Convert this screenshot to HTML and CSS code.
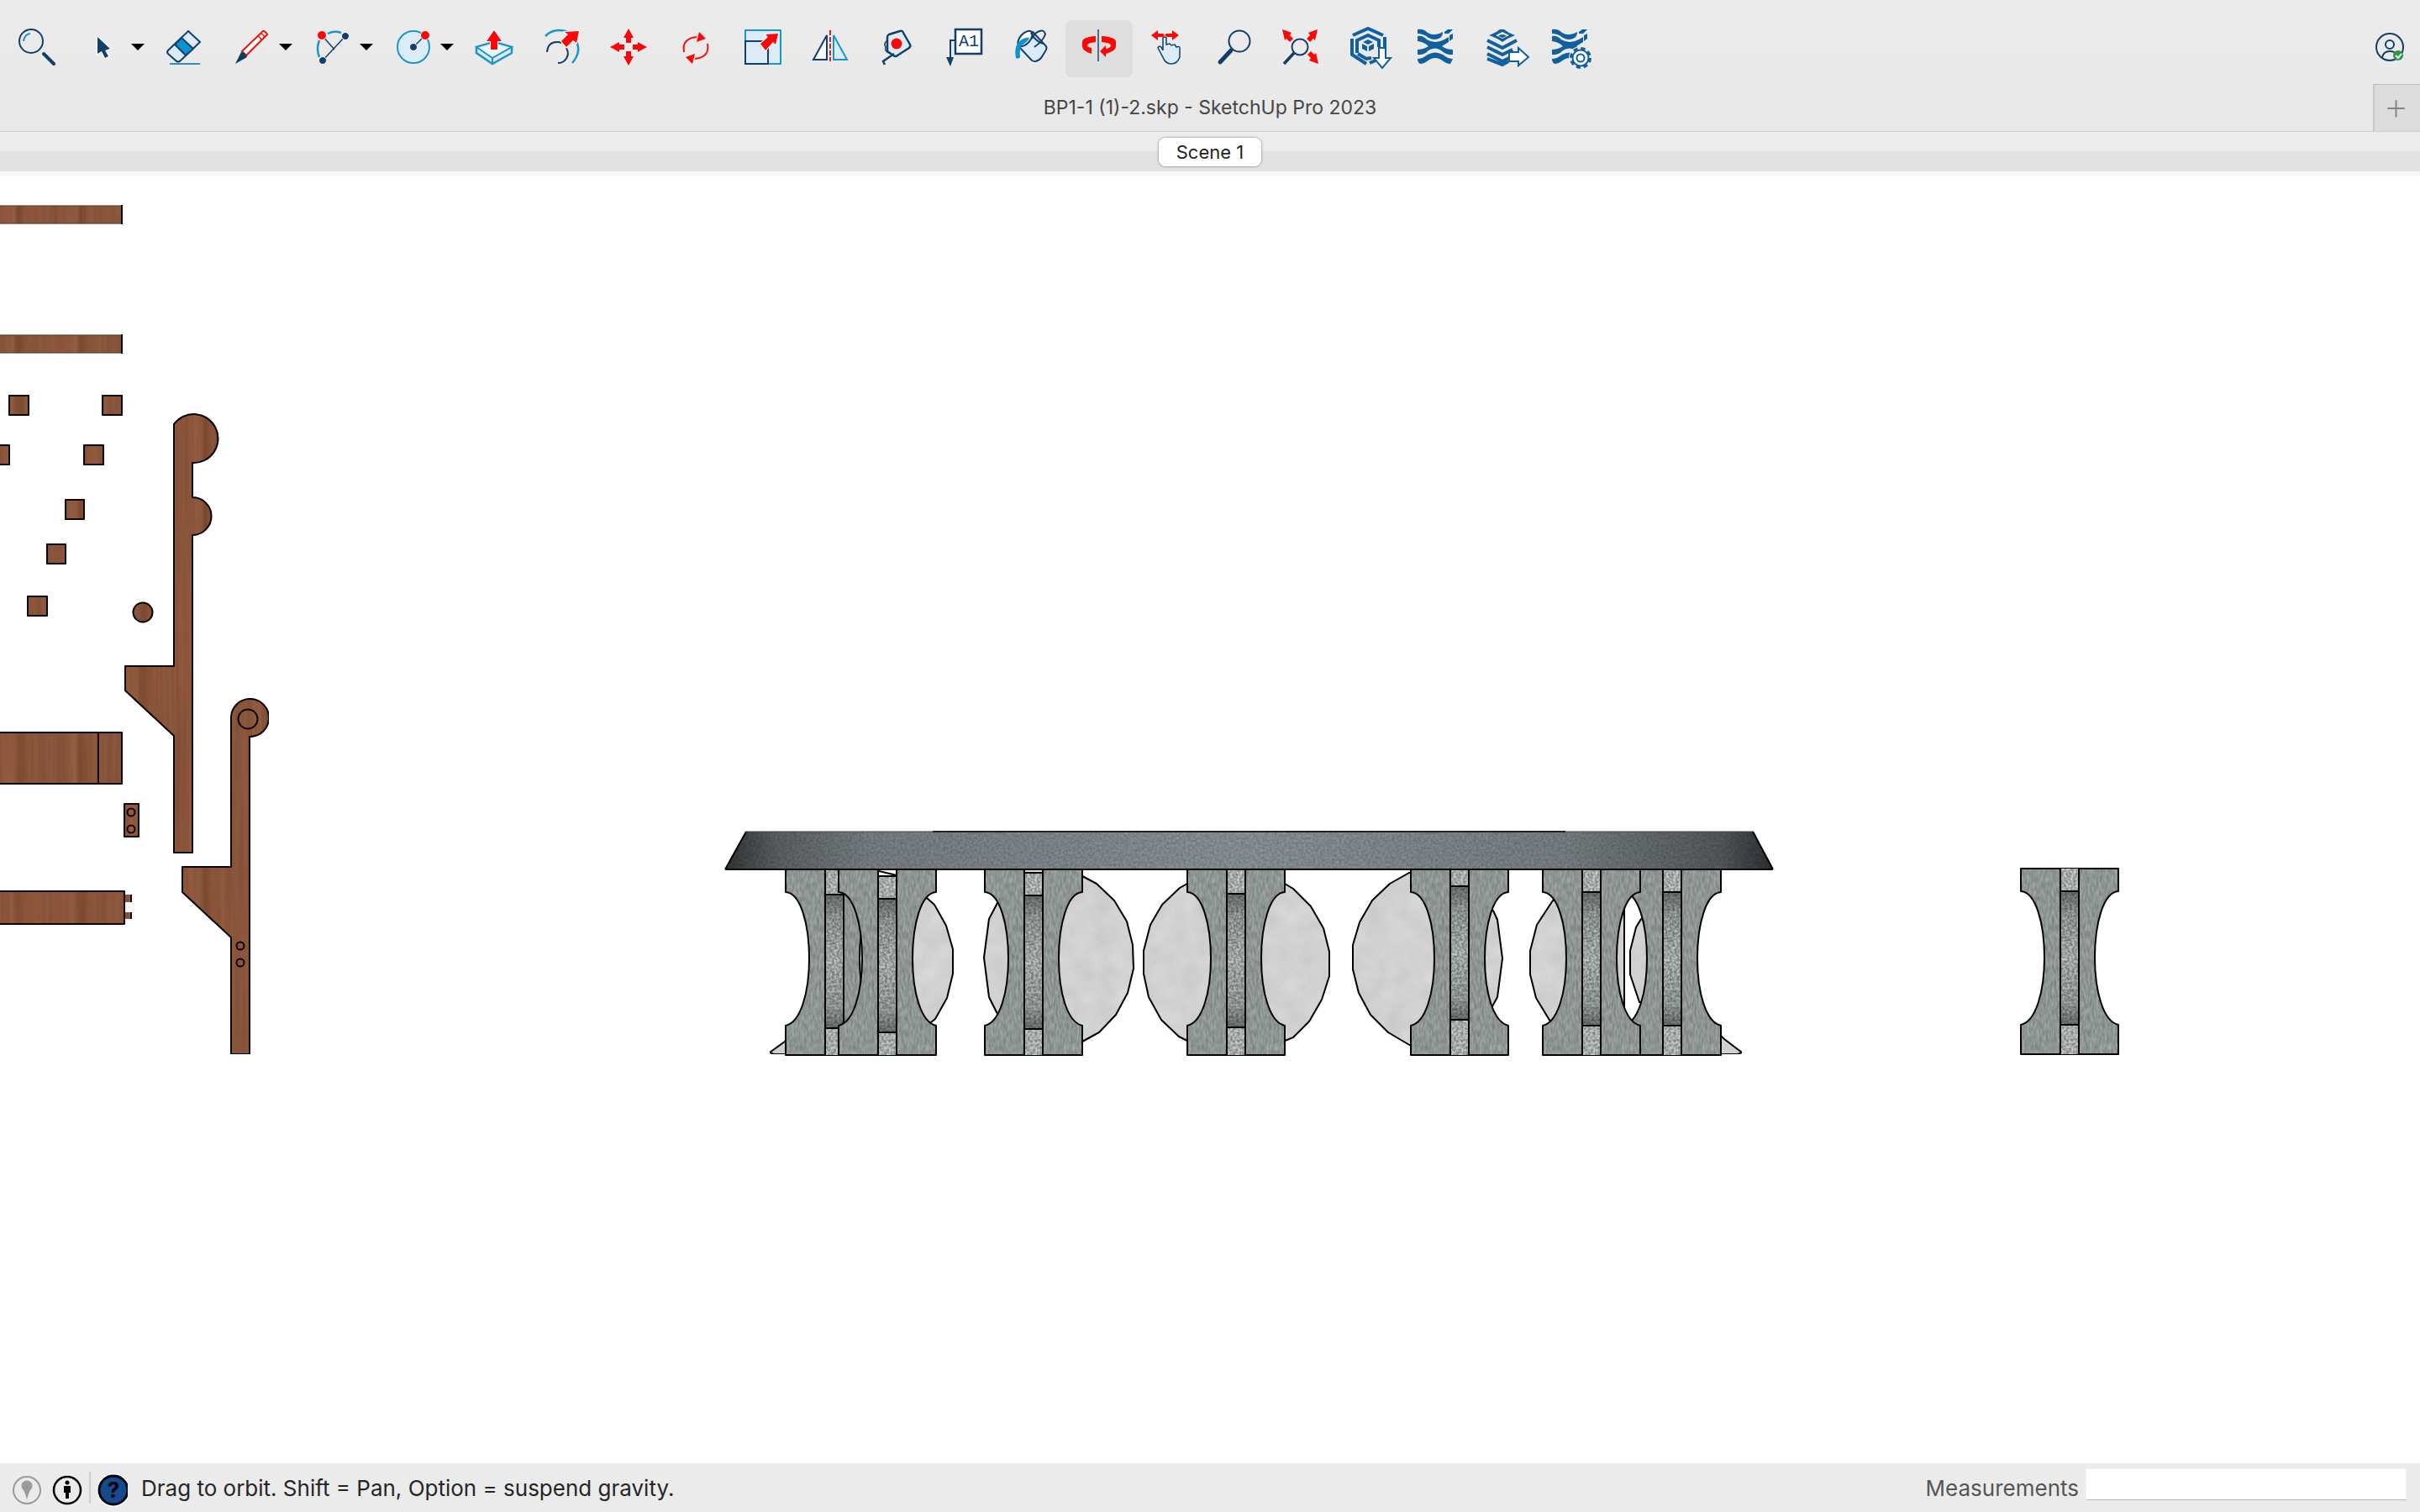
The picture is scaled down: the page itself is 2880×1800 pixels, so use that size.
FILE: index.html
```html
<!DOCTYPE html>
<html lang="en">
<head>
<meta charset="UTF-8">
<meta name="viewport" content="width=device-width, initial-scale=1.0">
<title>BP1-1 (1)-2.skp - SketchUp Pro 2023</title>
<link rel="stylesheet" href="styles.css">
</head>
<body>
<header>
    <div class="toolbar">
        <button class="tool" aria-label="Search">
            <svg viewBox="0 0 80 68">
                <circle class="navy" cx="33" cy="25" r="14"/>
                <path class="cyan" d="M24 25q1-8 8-9"/>
                <path class="navy" stroke-width="4" stroke-linecap="round" d="M48 40l12 12"/>
            </svg>
        </button>
        <div class="group">
            <button class="tool" aria-label="Select">
                <svg viewBox="0 0 64 68">
                    <path fill="#123f69" stroke="#fff" stroke-width="2" paint-order="stroke" d="M32 20v20l5-3 4 8 4-2-4-7 6-2z"/>
                </svg>
            </button>
            <button class="more" aria-label="Select options"><svg viewBox="0 0 32 68"><path d="M8 28h16l-8 8z"/></svg></button>
        </div>
        <button class="tool" aria-label="Eraser">
            <svg viewBox="0 0 80 68">
                <path class="navy" fill="#dcebf7" d="M44 13l14 13-23 22q-3 3-6 0l-9-8q-2-2 0-4z"/>
                <path fill="#0a93d3" stroke="#123f69" d="M36 21l14 13-9 8-13-13z"/>
                <path stroke="#2b93b8" d="M22 52h36"/>
            </svg>
        </button>
        <div class="group">
            <button class="tool" aria-label="Line">
                <svg viewBox="0 0 64 68">
                    <path fill="#fff" stroke="#e8150f" d="M28 37l25-24q3 0 5 4l-25 25z"/>
                    <path stroke="#e8150f" stroke-width="1.5" d="M46 19q4 1 5 5M50 16q4 1 5 5"/>
                    <path fill="#143a5c" d="M20 52l7-14q5 0 7 6z"/>
                </svg>
            </button>
            <button class="more" aria-label="Line options"><svg viewBox="0 0 32 68"><path d="M8 28h16l-8 8z"/></svg></button>
        </div>
        <div class="group">
            <button class="tool" aria-label="Arc">
                <svg viewBox="0 0 64 68">
                    <path class="cyan" stroke-width="2.5" d="M34 16q8-4 16-1M24 24q-4 10 0 20"/>
                    <path class="navy thin" d="M27 18l15 17M55 19L28 48"/>
                    <circle class="dot red" cx="27" cy="18" r="5.5"/>
                    <circle class="dot" cx="55" cy="19" r="4.5"/>
                    <circle class="dot" cx="28" cy="48" r="4.5"/>
                </svg>
            </button>
            <button class="more" aria-label="Arc options"><svg viewBox="0 0 32 68"><path d="M8 28h16l-8 8z"/></svg></button>
        </div>
        <div class="group">
            <button class="tool" aria-label="Circle">
                <svg viewBox="0 0 64 68">
                    <circle class="cyan tint" cx="40" cy="32" r="19"/>
                    <path class="navy thin" d="M40 32l14-14"/>
                    <circle class="dot red" cx="54" cy="18" r="5.5"/>
                    <circle class="dot" cx="40" cy="32" r="4.5"/>
                </svg>
            </button>
            <button class="more" aria-label="Circle options"><svg viewBox="0 0 32 68"><path d="M8 28h16l-8 8z"/></svg></button>
        </div>
        <button class="tool" aria-label="Push/Pull">
            <svg viewBox="0 0 80 68">
                <path class="cyan tint" stroke-width="2.5" d="M19 32l21-6 21 6v7L38 52 19 39z"/>
                <path class="cyan" fill="#e9f4fb" d="M19 32l21-6 21 6-23 13z"/>
                <path class="cyan" d="M38 45v7"/>
                <path class="arrow" d="M40 12l9 13h-5v10h-8V25h-5z"/>
            </svg>
        </button>
        <button class="tool" aria-label="Offset">
            <svg viewBox="0 0 80 68">
                <path class="cyan" stroke-width="2.5" d="M21 19q7-7 16-7 7 0 12 3M57 24q8 13-4 27"/>
                <path class="navy" d="M23 38q1-12 12-12 3 0 5 1M46 33q5 9-3 16-3 2-7 2"/>
                <path class="arrow" d="M61 13l-3 14-4-3-8 8-6-7 8-8-4-3z"/>
            </svg>
        </button>
        <button class="tool" aria-label="Move">
            <svg viewBox="0 0 80 68">
                <path fill="#fb0707" d="M40 10l6 11h-3v6h-6v-6h-3zM40 54l6-11h-3v-6h-6v6h-3zM18 32l11-6v3h6v6h-6v3zM62 32l-11-6v3h-6v6h6v3z"/>
            </svg>
        </button>
        <button class="tool" aria-label="Rotate">
            <svg viewBox="0 0 80 68">
                <path stroke="#f31212" d="M26 38q-3-16 15-18M54 28q3 16-15 18"/>
                <path fill="#fb0707" d="M44 14l8 8-11 4zM36 52l-8-8 11-4z"/>
            </svg>
        </button>
        <button class="tool" aria-label="Scale">
            <svg viewBox="0 0 80 68">
                <path class="cyan tint" d="M19 12h42v40H19z"/>
                <path class="navy tint" d="M19 25h27v27H19z"/>
                <path class="arrow" d="M58 16l-3 13-3-3-9 10-6-8 9-8-3-3z"/>
            </svg>
        </button>
        <button class="tool" aria-label="Flip">
            <svg viewBox="0 0 80 68">
                <path class="navy" fill="#fff" d="M36 18v29H20z"/>
                <path class="cyan tint" d="M44 18v29h16z"/>
                <path stroke="#d5202a" stroke-dasharray="6 2" d="M40 12v37"/>
            </svg>
        </button>
        <button class="tool" aria-label="Tape Measure">
            <svg viewBox="0 0 80 68">
                <path class="navy tint" stroke-width="2.5" stroke-linejoin="round" d="M28 20q0-2 2-3l13-4q3-1 4 2l8 14q1 2-1 4L40 42q-2 2-5 0l-7-5z"/>
                <path class="navy thin" d="M28 24q-5 4-2 8-2 5 4 7"/>
                <path class="navy" stroke-width="2.5" d="M36 40L23 49l2 4"/>
                <circle cx="39" cy="28" r="6.5" fill="#fb0707"/>
            </svg>
        </button>
        <button class="tool" aria-label="Text">
            <svg viewBox="0 0 80 68">
                <path class="navy" stroke-width="2.5" fill="#fff" d="M29 11h31v29H29z"/>
                <path class="navy" d="M29 24h-6v21"/>
                <path fill="#123f69" d="M18 44h9l-4 11z"/>
                <text class="a1" x="45" y="31">A1</text>
            </svg>
        </button>
        <button class="tool" aria-label="Paint">
            <svg viewBox="0 0 80 68">
                <path class="navy tint" d="M41 14l15 16q3 3 0 7l-5 8q-6 6-11 3L24 31z"/>
                <ellipse class="navy" fill="#fff" cx="32" cy="22" rx="11" ry="6" transform="rotate(-48 32 22)"/>
                <path fill="#0a93d3" d="M37 21q-1 4-9 9-3 3-2 14-2 3-5 1-3-16 7-22 5-3 9-2z"/>
                <path class="navy" d="M39 15q5 10 14 13M43 32q10-7 13-15-1-6-7-4-6 2-9 9"/>
            </svg>
        </button>
        <button class="tool active" aria-label="Orbit" aria-pressed="true">
            <svg viewBox="0 0 80 68">
                <path fill="#fb0707" d="M36 19q-16 1-16 7v5q0 6 11 9v-7q-5-1-5-3 0-3 10-4zM43 19q17 1 17 7v5q0 6-12 9v4l-7-7 7-7v4q6-1 6-4 0-3-11-4z"/>
                <path class="navy" stroke-opacity=".7" d="M39 11v38"/>
            </svg>
        </button>
        <button class="tool" aria-label="Pan">
            <svg viewBox="0 0 80 68">
                <path class="navy thin tint" d="M36 21q2-2 4 0v8l4-1 2 2 4-1 2 3q5-2 4 3v9q-3 8-10 8-5 0-8-4l-8-15q1-3 4-1l2 4z"/>
                <path fill="#fb0707" d="M22 18l8-6v4h6l2 2 2-2h7v-4l8 6-8 6v-4h-6l-3-2-2 2h-6v4z"/>
            </svg>
        </button>
        <button class="tool" aria-label="Zoom">
            <svg viewBox="0 0 80 68">
                <circle class="navy" cx="47" cy="25" r="12.5"/>
                <path class="navy" stroke-width="5" stroke-linecap="round" d="M37 36L24 50"/>
            </svg>
        </button>
        <button class="tool" aria-label="Zoom Extents">
            <svg viewBox="0 0 80 68">
                <circle class="navy" cx="39" cy="32" r="9.5"/>
                <path class="navy" stroke-width="3.5" d="M32 39L20 52"/>
                <path fill="#fb0707" d="M18 11l11 4-2 3 4 4-4 4-4-4-2 2zM60 11l-11 4 2 3-4 4 4 4 4-4 2 2zM61 52l-11-4 2-3-4-4 4-4 4 4 2-2z"/>
            </svg>
        </button>
        <button class="tool" aria-label="3D Warehouse">
            <svg viewBox="0 0 80 68">
                <g class="blue">
                    <path d="M22 18l18-8 18 8M21 22v19l17 11M60 20v12M42 51l7-3"/>
                    <path d="M27 39V24l13-6 13 6v8M28 40l10 6 6-1"/>
                </g>
                <path class="fill" d="M40 23l6 3-6 3-6-3zM33 28l6 3v6l-6-3zM47 28l-6 3v6l6-3z"/>
                <path class="out" d="M53 33h8v12h6L57 57 47 45h6z"/>
            </svg>
        </button>
        <button class="tool" aria-label="Extension Warehouse">
            <svg viewBox="0 0 80 68">
                <g id="ext" class="fill">
                    <path d="M19 11q7-1 12 4 9 5 18-1 0 5-3 7-7 4-14 0-6-5-13-5zM51 14l4-3h6l-5 5h-5z"/>
                    <path d="M19 19q6-1 11 4 10 6 21 0l5-3v6l-8 5q5 4 13 4v6q-8 1-14-5-7-5-15 0-5 6-13 5v-6q7 0 13-4-5-5-13-6zM57 18l4-2v6l-4 3z"/>
                    <path d="M19 46q6 0 12-5 9-5 18 0 6 5 12 5l-3 6q-5 0-11-5-7-4-14 0-6 5-11 5-3-2-3-6z"/>
                </g>
            </svg>
        </button>
        <button class="tool" aria-label="Send to LayOut">
            <svg viewBox="0 0 80 68">
                <path class="fill" fill-rule="evenodd" d="M24 18q8-3 13-7h5q6 5 13 7-8 3-15 8-7-5-16-8zM32 18l8 4 8-4-8-4z"/>
                <path class="fill" d="M35 19q5-4 10 0l-5 2z"/>
                <path class="blue" d="M22 24l18 9 17-9M22 32l18 9 12-6M22 40l18 9 8-4M22 46l18 7 7-4"/>
                <path class="out" d="M48 38h11v-5l12 11-12 10v-5H48z"/>
            </svg>
        </button>
        <button class="tool" aria-label="Extension Manager">
            <svg viewBox="0 0 80 68">
                <use href="#ext"/>
                <circle cx="53" cy="45" r="14" fill="#ebebeb"/>
                <circle cx="53" cy="45" r="11" stroke="#125f9e" stroke-width="4" stroke-dasharray="5 3.64"/>
                <circle class="out" cx="53" cy="45" r="9.5"/>
                <circle class="out" cx="53" cy="45" r="4.5"/>
            </svg>
        </button>
        <button class="tool account" aria-label="Account">
            <svg viewBox="0 0 80 68">
                <circle class="navy" cx="44" cy="32" r="16"/>
                <circle class="navy" cx="44" cy="29" r="5"/>
                <path class="navy" d="M35 45q1-8 9-8 6 0 8 4"/>
                <circle cx="54" cy="42" r="6" fill="#2e9447"/>
                <path stroke="#fff" d="M51 42l3 3 4-5"/>
            </svg>
        </button>
    </div>
    <div class="titlebar">
        <h1>BP1-1 (1)-2.skp - SketchUp Pro 2023</h1>
        <button class="add" aria-label="New tab">
            <svg viewBox="0 0 56 56"><path stroke="#848484" stroke-width="2" d="M16 28h21M26.5 18v21"/></svg>
        </button>
    </div>
</header>
<nav class="scenes">
    <button class="scene">Scene 1</button>
</nav>
<main>
    <svg class="model" viewBox="0 209 2880 1533" preserveAspectRatio="xMinYMin slice">
        <defs>
            <linearGradient id="wood" gradientUnits="userSpaceOnUse" x1="0" y1="0" x2="74" y2="0" spreadMethod="repeat">
                <stop offset="0" stop-color="#8a5339"/>
                <stop offset=".2" stop-color="#8e5a3f"/>
                <stop offset=".3" stop-color="#7a492f"/>
                <stop offset=".45" stop-color="#8b5539"/>
                <stop offset=".8" stop-color="#86543b"/>
                <stop offset="1" stop-color="#8a5339"/>
            </linearGradient>
            <linearGradient id="shade" x1="0" y1="0" x2="0" y2="1">
                <stop offset="0" stop-color="#5f6362"/>
                <stop offset=".17" stop-color="#858b8a"/>
                <stop offset=".5" stop-color="#9aa09f"/>
                <stop offset=".85" stop-color="#858b8a"/>
                <stop offset="1" stop-color="#5e6261"/>
            </linearGradient>
            <linearGradient id="slab" x1="0" y1="0" x2="1" y2="0">
                <stop offset="0" stop-color="#2e3132"/>
                <stop offset=".05" stop-color="#55595b"/>
                <stop offset=".14" stop-color="#70767a"/>
                <stop offset=".5" stop-color="#80888d"/>
                <stop offset=".8" stop-color="#707679"/>
                <stop offset=".95" stop-color="#4e5254"/>
                <stop offset="1" stop-color="#2b2d2f"/>
            </linearGradient>
            <!-- multiplies the fill by noise, black edges stay black -->
            <filter id="grain" x="0" y="0" width="1" height="1" color-interpolation-filters="sRGB">
                <feTurbulence type="fractalNoise" baseFrequency=".4 .12" numOctaves="2" seed="3"/>
                <feColorMatrix values="1 0 0 0 0  1 0 0 0 0  1 0 0 0 0  0 0 0 0 1" result="n"/>
                <feComposite in="SourceGraphic" in2="n" operator="arithmetic" k1=".45" k2=".8"/>
            </filter>
            <filter id="speckle" x="0" y="0" width="1" height="1" color-interpolation-filters="sRGB">
                <feTurbulence type="fractalNoise" baseFrequency=".35" numOctaves="2" seed="8"/>
                <feColorMatrix values="2 0 0 0 -.5  2 0 0 0 -.5  2 0 0 0 -.5  0 0 0 0 1" result="n"/>
                <feComposite in="SourceGraphic" in2="n" operator="arithmetic" k1=".5" k2=".77"/>
            </filter>
            <filter id="fine" x="0" y="0" width="1" height="1" color-interpolation-filters="sRGB">
                <feTurbulence type="fractalNoise" baseFrequency=".35" numOctaves="2" seed="5"/>
                <feColorMatrix values="1 0 0 0 0  1 0 0 0 0  1 0 0 0 0  0 0 0 0 1" result="n"/>
                <feComposite in="SourceGraphic" in2="n" operator="arithmetic" k1=".4" k2=".8"/>
            </filter>
            <filter id="cloud" x="0" y="0" width="1" height="1" color-interpolation-filters="sRGB">
                <feTurbulence type="fractalNoise" baseFrequency=".04" numOctaves="3" seed="2"/>
                <feColorMatrix values="1 0 0 0 0  1 0 0 0 0  1 0 0 0 0  0 0 0 0 1" result="n"/>
                <feComposite in="SourceGraphic" in2="n" operator="arithmetic" k1=".1" k2=".94"/>
            </filter>
            <filter id="woodgrain" x="0" y="0" width="1" height="1" color-interpolation-filters="sRGB">
                <feTurbulence type="fractalNoise" baseFrequency=".2 .006" numOctaves="2" seed="4"/>
                <feColorMatrix values="1 0 0 0 0  1 0 0 0 0  1 0 0 0 0  0 0 0 0 1" result="n"/>
                <feComposite in="SourceGraphic" in2="n" operator="arithmetic" k1=".2" k2=".91"/>
            </filter>
            <g id="column">
                <g filter="url(#grain)">
                    <path fill="#8b918f" d="M0 0V27C18 28 28 66 28 106S18 182 0 186V221H116V186C98 182 88 146 88 106S98 28 116 27V0z"/>
                </g>
                <path fill="none" d="M0 0V27C18 28 28 66 28 106S18 182 0 186V221H116V186C98 182 88 146 88 106S98 28 116 27V0z"/>
                <path fill="#a2a7a5" filter="url(#speckle)" d="M47 0h22v221H47z"/>
                <path fill="none" d="M47 0v221M69 0v221"/>
            </g>
            <g id="band">
                <path fill="url(#shade)" filter="url(#speckle)" d="M0 0h22v159H0z"/>
                <path fill="none" d="M0 0h22v159H0z"/>
            </g>
        </defs>

        <g class="wood" filter="url(#woodgrain)">
            <path d="M-4 245H145V266H-4zM-4 399H145V420H-4z" stroke="#4c3a33" stroke-width="1"/>
            <path d="M145 244v23M145 398v23"/>
            <path d="M11 471h23v23H11zM122 471h23v23H122zM-11 530H11v23H-11zM100 530h23v23h-23zM78 595h22v23H78zM56 648h22v23H56zM33 710h23v23H33z"/>
            <circle cx="170" cy="729" r="11.5"/>
            <path d="M207 505A29 29 0 1 1 229 551V592A22 22 0 0 1 229 637V1015H207V876L149 822V793H207z"/>
            <path d="M275 1032V854A22.500 22.500 0 1 1 297 877V1255H275V1116L217 1062V1032z"/>
            <circle cx="295" cy="856" r="11.5"/>
            <circle cx="286" cy="1126" r="4.5"/>
            <circle cx="286" cy="1146" r="4.5"/>
            <path d="M-4 872H145V933H-4zM117 872v61"/>
            <path d="M148 957h17v39H148z"/>
            <circle cx="156" cy="967" r="4.5"/>
            <circle cx="156" cy="987" r="4.5"/>
            <path d="M148 1065h8v9h-8zM148 1086h8v8h-8z" stroke="none"/>
            <path d="M-4 1061H148V1100H-4zM156 1065v9M156 1086v8"/>
        </g>

        <g class="stone">
            <g fill="#d3d3d3" filter="url(#cloud)">
                <path d="M1080 1069H1103L1112 1077 1126 1102 1134 1130V1159L1127 1188 1113 1213 1108 1217H1080z"/>
                <path d="M1200 1060L1187 1075 1177 1094 1171 1140 1177 1187 1187 1207 1200 1220z"/>
                <path d="M1260 1043H1288L1305 1052 1326 1072 1341 1097 1348 1125 1349 1153 1342 1182 1328 1208 1308 1229 1288 1240H1260z"/>
                <path d="M1413 1052L1404 1057 1383 1077 1369 1101 1361 1132V1159L1367 1187 1382 1214 1403 1234 1413 1239H1529L1539 1235 1558 1216 1573 1190 1582 1162V1133L1575 1105 1560 1079 1539 1058 1529 1052z"/>
                <path d="M1679 1038L1654 1052 1633 1072 1618 1098 1610 1125V1154L1617 1182 1631 1208 1652 1229 1679 1245H1740V1038z"/>
                <path d="M1760 1084H1777L1782 1095 1788 1141 1782 1187 1776 1198H1760z"/>
                <path d="M1870 1072H1848L1829 1101 1821 1132V1160L1828 1188 1845 1216H1870z"/>
                <path d="M1915 1075H1933V1208H1915z"/>
                <path d="M1965 1094H1953L1947 1104 1940 1132V1160L1951 1193H1965z"/>
                <path d="M938 1237L916 1253 921 1255H938zM2045 1230L2052 1237 2073 1253 2068 1255H2045z"/>
            </g>
            <use href="#column" x="935" y="1035"/>
            <use href="#band" x="982" y="1065"/>
            <use href="#column" x="998" y="1035"/>
            <use href="#band" x="1045" y="1070"/>
            <path fill="#fff" d="M1045 1035h22v8h-22zM1046 1037l21 5"/>
            <use href="#column" x="1172" y="1035"/>
            <use href="#band" x="1219" y="1066"/>
            <path fill="#ddd" d="M1219 1035h22v4h-22z"/>
            <use href="#column" x="1413" y="1035"/>
            <use href="#band" x="1460" y="1064"/>
            <use href="#column" x="1679" y="1035"/>
            <use href="#band" x="1726" y="1055"/>
            <use href="#column" x="1932" y="1035"/>
            <use href="#band" x="1979" y="1062"/>
            <use href="#column" x="1836" y="1035"/>
            <use href="#band" x="1883" y="1062"/>
            <use href="#column" x="2405" y="1034"/>
            <use href="#band" x="2452" y="1061"/>
            <path fill="url(#slab)" stroke="none" filter="url(#fine)" d="M888 990H2086L2110 1035H863z"/>
            <path d="M863 1035H2110M1110 990H1863M888 990l-25 45M2086 990l24 45"/>
            <path stroke-width="1" stroke="#444" d="M888 990H2086"/>
        </g>
    </svg>
</main>
<footer>
    <svg class="info" viewBox="0 0 152 58" role="img" aria-label="Geo-location, credits and help">
        <circle cx="32" cy="32" r="16" fill="none" stroke="#9b9b9b" stroke-width="2"/>
        <path fill="#9b9b9b" d="M32 43q-2-7-4-11a6.500 6.500 0 1 1 8 0q-2 4-4 11z"/>
        <circle cx="80" cy="32" r="16" fill="none" stroke="#000" stroke-width="2.5"/>
        <circle cx="80" cy="23" r="2.5"/>
        <path d="M76 27h8v8h-2v7h-4v-7h-2z"/>
        <path stroke="#cfcfcf" stroke-width="2" d="M107 10v38"/>
        <circle cx="135" cy="32" r="20" fill="#fff"/>
        <circle cx="135" cy="32" r="17" fill="#164a8c" stroke="#00050f" stroke-width="3"/>
        <text class="help" x="135" y="41">?</text>
    </svg>
    <p>Drag to orbit. Shift = Pan, Option = suspend gravity.</p>
    <label for="measure">Measurements</label>
    <input id="measure" type="text">
</footer>
</body>
</html>
```
FILE: styles.css
```css
* {
    box-sizing: border-box;
}
html, body {
    height: 100%;
}
body {
    display: flex;
    flex-direction: column;
    margin: 0;
    font-family: Inter, "Liberation Sans", sans-serif;
    background: #fff;
    overflow: hidden;
}
button {
    padding: 0;
    border: 0;
    background: none;
    font: inherit;
}
svg {
    display: block;
}
header {
    background: linear-gradient(#ebebeb, #e8e8e8);
    border-bottom: 1px solid #d2d2d2;
}
.toolbar {
    display: flex;
    padding: 24px 0 8px 4px;
}
.tool svg {
    height: 68px;
    fill: none;
    stroke-width: 2;
}
.group {
    display: flex;
}
.active {
    background: #dedede;
    border-radius: 8px;
}
.account {
    margin-left: auto;
}
.navy {
    stroke: #123f69;
}
.cyan {
    stroke: #1a96c9;
}
.blue {
    stroke: #125f9e;
    stroke-width: 4;
}
.thin {
    stroke-width: 1.5;
}
.tint {
    fill: #dcebf8;
}
.fill {
    fill: #125f9e;
}
.out {
    fill: #fff;
    stroke: #125f9e;
}
.dot {
    fill: #123f69;
    stroke: #fff;
    stroke-width: 1;
}
.red {
    fill: #fb0707;
}
.arrow {
    fill: #fb0707;
    stroke: #fff;
    paint-order: stroke;
}
.a1 {
    font: 20px "Liberation Mono", monospace;
    fill: #123f69;
    text-anchor: middle;
}
.more svg {
    width: 32px;
    height: 68px;
}
.titlebar {
    display: grid;
    grid-template-columns: 1fr auto 1fr;
    align-items: center;
    height: 56px;
}
h1 {
    grid-column: 2;
    margin: 0;
    font-size: 23px;
    font-weight: 400;
    line-height: 28px;
    color: #464646;
}
.add {
    justify-self: end;
    width: 56px;
    height: 56px;
    background: #dcdcdc;
    border-top: 1px solid #bdbdbd;
    border-left: 2px solid #c8c8c8;
}
.scenes {
    display: flex;
    justify-content: center;
    padding: 7px 0 6px;
    background: linear-gradient(#ececec 23px, #e2e2e2 23px);
}
.scene {
    width: 122px;
    height: 34px;
    font-size: 22px;
    line-height: 32px;
    color: #222;
    background: #fff;
    border-radius: 8px;
    box-shadow: 0 0 2px 1px rgba(0, 0, 0, .25);
}
main {
    flex: 1;
    min-height: 0;
    border-top: 5px solid #f6f6f6;
}
.model {
    width: 100%;
    height: 100%;
}
.wood {
    fill: url(#wood);
    stroke: #0a0503;
    stroke-width: 2;
    stroke-linejoin: round;
}
.stone {
    stroke: #000;
    stroke-width: 2;
    stroke-linejoin: round;
}
#column > g path, #column > [filter], #band > [filter] {
    stroke: none;
}
footer {
    display: flex;
    align-items: center;
    height: 58px;
    padding-right: 16px;
    background: #ebebeb;
    font-size: 26px;
    color: #262626;
}
.info {
    width: 152px;
    height: 58px;
}
.help {
    font-size: 26px;
    font-weight: 700;
    text-anchor: middle;
}
footer p {
    margin: 0 auto 0 16px;
}
label {
    color: #555;
}
input {
    width: 382px;
    height: 38px;
    margin: 0 0 8px 8px;
    padding: 0 8px;
    border: 1px solid #f4f4f4;
    border-bottom: 1px solid #b4b4b4;
    background: #fff;
    font: inherit;
}
```
